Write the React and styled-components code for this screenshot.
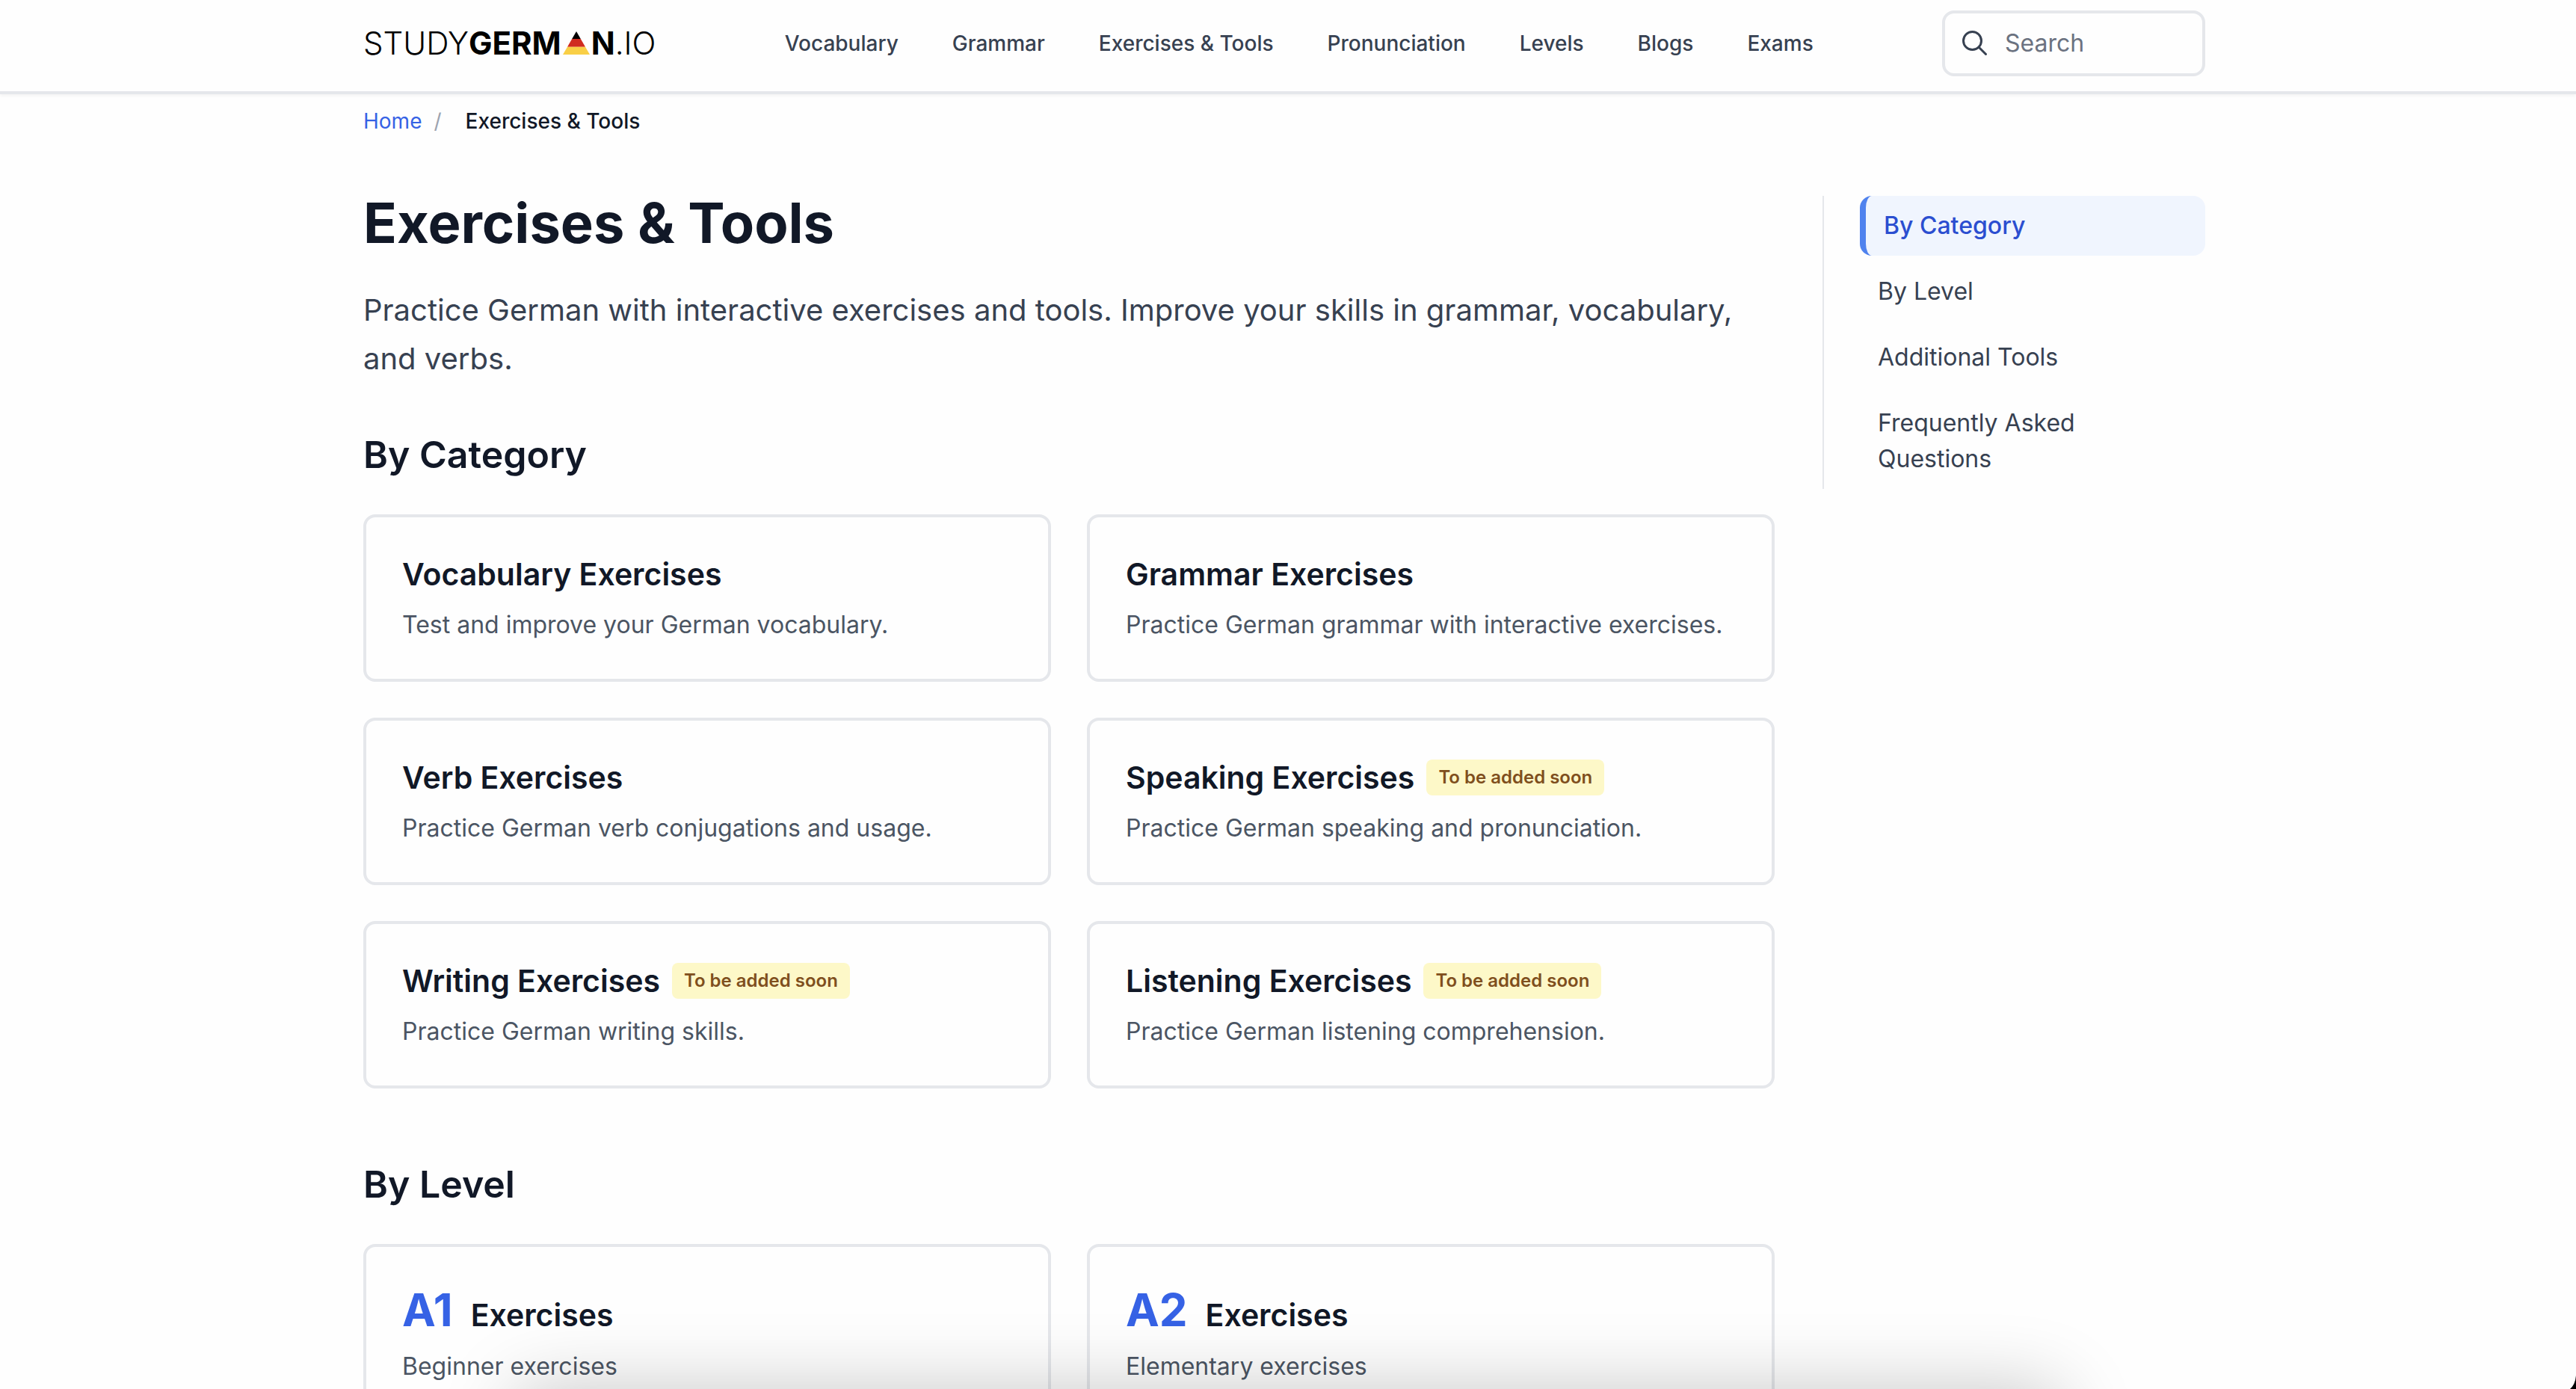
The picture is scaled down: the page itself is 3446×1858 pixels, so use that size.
import React from "react";
import styled, { createGlobalStyle } from "styled-components";

const color = {
  page: "#fefefe",
  line: "#e5e7eb",
  ink: "#111827",
  body: "#374151",
  muted: "#4b5563",
  placeholder: "#6b7280",
  blue: "#3662e5",
};

const GlobalStyle = createGlobalStyle`
  *, *::before, *::after { box-sizing: border-box; }
  body {
    margin: 0;
    background: ${color.page};
    color: ${color.ink};
    font-family: Inter, "Liberation Sans", sans-serif;
    font-size: 32px;
    line-height: 48px;
  }
  h1, h2, h3, p, ul, ol { margin: 0; padding: 0; }
  ul, ol { list-style: none; }
  a { color: inherit; text-decoration: none; }
`;

const Screen = styled.div`
  height: 100vh;
  overflow: hidden auto;
  scrollbar-width: none;
`;

const Header = styled.header`
  padding: 14px 10px 20px 0;
  border-bottom: 4px solid ${color.line};
  box-shadow: 0 2px 4px rgba(0, 0, 0, 0.05);
`;

const Container = styled.div`
  max-width: 2560px;
  margin: 0 auto;
  padding: 0 48px;
`;

const Bar = styled(Container)`
  display: flex;
  align-items: center;
  justify-content: space-between;
`;

const Logo = styled.a`
  display: flex;
  align-items: baseline;
  color: #000;
  font-size: 42px;
  font-weight: 300;

  strong { font-weight: 700; }
  svg { margin: 0 2px; }
`;

const Nav = styled.nav`
  display: flex;
  gap: 72px;
  color: ${color.body};
  font-size: 28px;
  font-weight: 500;
`;

const SearchBox = styled.label`
  display: flex;
  align-items: center;
  gap: 20px;
  width: 352px;
  height: 88px;
  padding: 0 20px;
  border: 4px solid ${color.line};
  border-radius: 16px;
  color: ${color.body};

  svg { flex: none; }
`;

const SearchInput = styled.input`
  flex: 1;
  min-width: 0;
  padding: 0;
  border: 0;
  outline: 0;
  background: transparent;
  color: ${color.ink};
  font: inherit;

  &::placeholder { color: ${color.placeholder}; opacity: 1; }
`;

const Body = styled.div`
  padding-right: 10px;
`;

const Crumbs = styled.ol`
  display: flex;
  padding: 16px 0 80px;
  font-size: 28px;
  line-height: 40px;

  a { color: ${color.blue}; }
`;

const Slash = styled.li`
  margin: 0 32px 0 16px;
  color: #9ca3af;
`;

const Current = styled.li`
  font-weight: 500;
`;

const Columns = styled.div`
  display: grid;
  grid-template-columns: minmax(0, 1fr) 512px;
  column-gap: 64px;
  align-items: start;
`;

const Title = styled.h1`
  font-size: 74px;
  line-height: 72px;
  font-weight: 700;
`;

const Intro = styled.p`
  margin-top: 48px;
  color: ${color.body};
  font-size: 40px;
  line-height: 65px;
`;

const Section = styled.section`
  margin-top: ${(p) => (p.$first ? 64 : 96)}px;
`;

const SectionTitle = styled.h2`
  margin-bottom: 48px;
  font-size: 50px;
  line-height: 64px;
  font-weight: 600;
`;

const CardGrid = styled.div`
  display: grid;
  grid-template-columns: repeat(2, minmax(0, 1fr));
  gap: 48px;
`;

const Card = styled.a`
  display: block;
  padding: 48px;
  border: 4px solid ${color.line};
  border-radius: 16px;
`;

const CardHead = styled.div`
  display: flex;
  align-items: ${(p) => (p.$baseline ? "baseline" : "center")};
  gap: ${(p) => (p.$baseline ? 24 : 16)}px;
  margin-bottom: 16px;
`;

const CardTitle = styled.h3`
  font-size: 41px;
  line-height: 56px;
  font-weight: 600;
`;

const LevelCode = styled.span`
  color: ${color.blue};
  font-size: 60px;
  line-height: 72px;
  font-weight: 700;
`;

const Badge = styled.span`
  padding: 8px 16px;
  border-radius: 8px;
  background: #fdf8c8;
  color: #7f4f1d;
  font-size: 24px;
  line-height: 32px;
  font-weight: 600;
`;

const CardText = styled.p`
  color: ${color.muted};
`;

const Toc = styled.nav`
  padding-left: 48px;
  border-left: 2px solid ${color.line};
`;

const TocList = styled.ul`
  display: flex;
  flex-direction: column;
  gap: 8px;
`;

const TocLink = styled.a`
  display: block;
  padding: 16px 24px;
  border-left: ${(p) => (p.$active ? "8px solid #4f82ee" : "0")};
  border-radius: 16px;
  background: ${(p) => (p.$active ? "#f0f5fe" : "transparent")};
  color: ${(p) => (p.$active ? "#2b4ed0" : color.body)};
  font-weight: ${(p) => (p.$active ? 500 : 400)};
`;

/* Soft shadow thrown up from the bottom edge of the window */
const BottomShadow = styled.div`
  position: fixed;
  top: 100%;
  left: 20%;
  right: 20%;
  height: 200px;
  border-radius: 24px;
  box-shadow: 0 0 100px rgba(0, 0, 0, 0.22);
  pointer-events: none;
`;

const WindowCorner = styled.svg`
  position: fixed;
  right: 0;
  bottom: 0;
`;

const navItems = ["Vocabulary", "Grammar", "Exercises & Tools", "Pronunciation", "Levels", "Blogs", "Exams"];

const categories = [
  { title: "Vocabulary Exercises", text: "Test and improve your German vocabulary." },
  { title: "Grammar Exercises", text: "Practice German grammar with interactive exercises." },
  { title: "Verb Exercises", text: "Practice German verb conjugations and usage." },
  { title: "Speaking Exercises", text: "Practice German speaking and pronunciation.", soon: true },
  { title: "Writing Exercises", text: "Practice German writing skills.", soon: true },
  { title: "Listening Exercises", text: "Practice German listening comprehension.", soon: true },
];

const levels = [
  { code: "A1", text: "Beginner exercises" },
  { code: "A2", text: "Elementary exercises" },
];

const tocItems = ["By Category", "By Level", "Additional Tools", "Frequently Asked Questions"];

function FlagTriangle() {
  return (
    <svg width="36" height="31" viewBox="0 0 36 31" aria-label="A" role="img">
      <path d="M18 0 L23.8 10 H12.2Z" fill="#000" />
      <path d="M12.2 10 H23.8 L30 20.7 H6Z" fill="#d02c20" />
      <path d="M6 20.7 H30 L36 31 H0Z" fill="#f9cf46" />
    </svg>
  );
}

function SearchIcon() {
  return (
    <svg width="40" height="40" viewBox="0 0 40 40" fill="none" stroke="currentColor" strokeWidth="3" strokeLinecap="round" aria-hidden="true">
      <circle cx="16.5" cy="16.5" r="12" />
      <path d="M25 25 L34.5 34.5" />
    </svg>
  );
}

export default function App() {
  return (
    <Screen>
      <GlobalStyle />
      <Header>
        <Bar>
          <Logo href="#">
            STUDY<strong>GERM</strong>
            <FlagTriangle />
            <strong>N</strong>.IO
          </Logo>
          <Nav aria-label="Main">
            {navItems.map((item) => (
              <a href="#" key={item}>{item}</a>
            ))}
          </Nav>
          <SearchBox>
            <SearchIcon />
            <SearchInput type="text" placeholder="Search" aria-label="Search" />
          </SearchBox>
        </Bar>
      </Header>
      <Body>
        <Container>
          <nav aria-label="Breadcrumb">
            <Crumbs>
              <li><a href="#">Home</a></li>
              <Slash aria-hidden="true">/</Slash>
              <Current aria-current="page">Exercises &amp; Tools</Current>
            </Crumbs>
          </nav>
          <Columns>
            <main>
              <Title>Exercises &amp; Tools</Title>
              <Intro>
                Practice German with interactive exercises and tools. Improve your skills in grammar, vocabulary, and verbs.
              </Intro>
              <Section $first>
                <SectionTitle>By Category</SectionTitle>
                <CardGrid>
                  {categories.map((c) => (
                    <Card href="#" key={c.title}>
                      <CardHead>
                        <CardTitle>{c.title}</CardTitle>
                        {c.soon && <Badge>To be added soon</Badge>}
                      </CardHead>
                      <CardText>{c.text}</CardText>
                    </Card>
                  ))}
                </CardGrid>
              </Section>
              <Section>
                <SectionTitle>By Level</SectionTitle>
                <CardGrid>
                  {levels.map((l) => (
                    <Card href="#" key={l.code}>
                      <CardHead $baseline>
                        <LevelCode>{l.code}</LevelCode>
                        <CardTitle>Exercises</CardTitle>
                      </CardHead>
                      <CardText>{l.text}</CardText>
                    </Card>
                  ))}
                </CardGrid>
              </Section>
            </main>
            <Toc aria-label="On this page">
              <TocList>
                {tocItems.map((item, i) => (
                  <li key={item}>
                    <TocLink href="#" $active={i === 0}>{item}</TocLink>
                  </li>
                ))}
              </TocList>
            </Toc>
          </Columns>
        </Container>
      </Body>
      <BottomShadow />
      <WindowCorner width="8" height="18" viewBox="0 0 8 18" aria-hidden="true">
        <path d="M8 0 Q7 12 0 18 H8Z" fill="#000" />
      </WindowCorner>
    </Screen>
  );
}
